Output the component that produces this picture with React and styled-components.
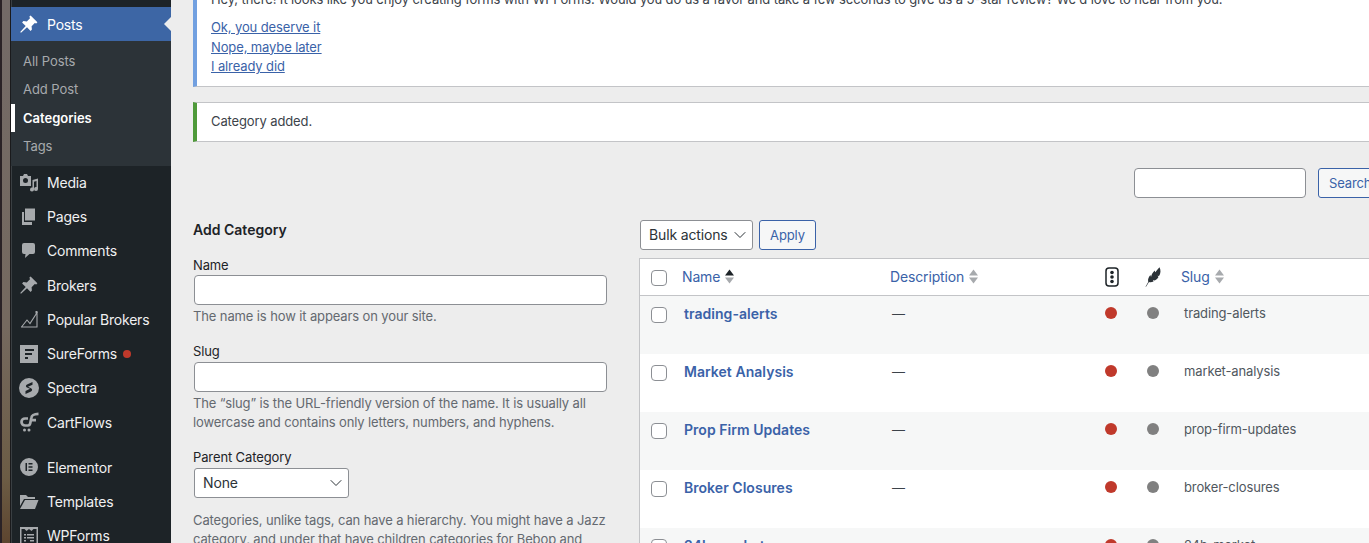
import styled, { createGlobalStyle } from 'styled-components';
import { ChevronDown } from 'lucide-react';

const Global = createGlobalStyle`
    html, body {
        margin: 0;
        height: 100%;
        overflow: hidden;
        background: #ededed;
    }
    * {
        box-sizing: border-box;
    }
    body {
        font-family: Inter, "Liberation Sans", sans-serif;
        font-size: 13px;
        letter-spacing: -0.12px;
        color: #3c434a;
    }
`;

const Page = styled.div`
    display: flex;
    width: 1369px;
    height: 543px;
    overflow: hidden;
`;

const Strip = styled.div`
    width: 11px;
    flex: none;
    background:
        linear-gradient(90deg, #2a2226 0 2px, transparent 2px 10px, #1a1a1c 10px 11px),
        linear-gradient(180deg, #736a67 0, #75695f 60%, #6c5c45 88%, #5d452f 100%);
`;

const Sidebar = styled.nav`
    width: 160px;
    flex: none;
    background: #1d2327;
    box-shadow: inset 1px 0 #3a3f43;
    padding-top: 7px;
`;

const ActiveItem = styled.div`
    position: relative;
    display: flex;
    align-items: center;
    height: 34px;
    background: #3d66a5;
    color: #fff;
    font-size: 14px;
    letter-spacing: -0.2px;
    padding-left: 8px;
    gap: 8px;

    &::after {
        content: '';
        position: absolute;
        right: 0;
        top: 10px;
        border: 7px solid transparent;
        border-right-color: #ededed;
        border-left-width: 0;
    }
`;

const SubMenu = styled.div`
    background: #2c3338;
    padding: 6px 0;
`;

const SubItem = styled.div`
    display: flex;
    align-items: center;
    height: 28.3px;
    padding-left: 8px;
    font-size: 13px;
    letter-spacing: ${p => (p.$current ? '0' : '-0.05px')};
    color: ${p => (p.$current ? '#fff' : '#a7aaad')};
    font-weight: ${p => (p.$current ? 600 : 400)};
    border-left: 4px solid ${p => (p.$current ? '#fff' : 'transparent')};
`;

const MenuList = styled.div`
    display: flex;
    flex-direction: column;
    margin-top: -0.9px;
`;

const MenuItem = styled.div`
    display: flex;
    align-items: center;
    height: 34.25px;
    padding-left: 8px;
    gap: 8px;
    font-size: 14px;
    letter-spacing: -0.2px;
    color: #f0f0f1;
    margin-top: ${p => (p.$separated ? '11px' : '0')};
`;

const IconBox = styled.span`
    width: 20px;
    height: 20px;
    flex: none;
    display: inline-flex;
    color: #a7aaad;

    svg {
        width: 20px;
        height: 20px;
        fill: currentColor;
    }
`;

const ActiveIconBox = styled(IconBox)`
    color: #fff;
`;

const Badge = styled.span`
    width: 8px;
    height: 8px;
    border-radius: 50%;
    background: #c0392b;
    margin-left: -2px;
`;

const Content = styled.main`
    flex: 1;
    min-width: 0;
    padding-left: 22px;
    overflow: hidden;
`;

const Notice = styled.div`
    width: 1300px;
    background: #fff;
    border: 1px solid #c3c4c7;
    border-left: 4px solid ${p => p.$accent};
    padding: 0 14px;
`;

const RatingNotice = styled(Notice)`
    margin-top: -16px;
    height: 103px;
    padding-top: 4px;
`;

const SavedNotice = styled(Notice)`
    margin-top: 15px;
    height: 40px;
    display: flex;
    align-items: center;
    padding-bottom: 2px;
`;

const NoticeText = styled.p`
    margin: 0 0 9px;
    line-height: 20px;
    white-space: nowrap;
`;

const NoticeLink = styled.a`
    display: block;
    color: #3a62a8;
    text-decoration: underline;
    line-height: 19.5px;
`;

const SearchRow = styled.div`
    display: flex;
    margin-top: 26px;
    margin-left: 941px;
    gap: 12px;
    width: 300px;
`;

const TextInput = styled.div`
    height: 30px;
    width: ${p => p.$width};
    flex: none;
    background: #fff;
    border: 1px solid #8c8f94;
    border-radius: 4px;
`;

const OutlineButton = styled.div`
    height: 30px;
    flex: none;
    display: flex;
    align-items: center;
    padding: 0 10px 1px;
    background: #f6f7f7;
    border: 1px solid #3a62a8;
    border-radius: 3px;
    color: #3a62a8;
`;

const Columns = styled.div`
    display: flex;
    margin-top: 22px;
`;

const FormColumn = styled.section`
    width: 447px;
    flex: none;
`;

const FormTitle = styled.h2`
    margin: 0 0 16px;
    font-size: 14px;
    letter-spacing: 0;
    line-height: 20px;
    font-weight: 600;
    color: #1d2327;
`;

const Field = styled.div`
    width: 415px;
    margin-bottom: 16px;
`;

const FieldLabel = styled.label`
    display: block;
    line-height: 18px;
    margin-bottom: ${p => p.$gap || '1px'};
    color: #1d2327;
`;

const FieldInput = styled(TextInput)`
    margin-left: 1px;
    width: 413px;
`;

const Help = styled.p`
    margin: ${p => p.$top || '2px'} 0 0;
    line-height: 19px;
    color: #646970;
`;

const SelectBox = styled.div`
    display: flex;
    align-items: center;
    justify-content: space-between;
    width: ${p => p.$width};
    height: 30px;
    flex: none;
    margin-left: ${p => p.$offset || '0'};
    padding: 0 2px 2px 8px;
    background: #fff;
    border: 1px solid #8c8f94;
    border-radius: 3px;
    font-size: 14px;
    letter-spacing: -0.15px;
    color: #2c3338;

    svg {
        margin-top: 2px;
    }
`;

const ListColumn = styled.section`
    width: 800px;
    flex: none;
`;

const BulkRow = styled.div`
    display: flex;
    gap: 6px;
    margin-bottom: 8px;
`;

const ApplyButton = styled(OutlineButton)`
    width: 57px;
    justify-content: center;
    padding: 0 0 1px;
`;

const ListTable = styled.div`
    margin-left: -1px;
    background: #fff;
    border: 1px solid #c3c4c7;
    border-right: 0;
`;

const Row = styled.div`
    display: grid;
    grid-template-columns: 42px 208px 207px 46px 38px 1fr;
    height: ${p => (p.$head ? '37px' : '58px')};
    align-items: ${p => (p.$head ? 'center' : 'start')};
    padding-top: ${p => (p.$head ? '0' : '8px')};
    padding-bottom: ${p => (p.$head ? '2px' : '0')};
    background: ${p => (p.$alt ? '#f6f7f7' : '#fff')};
    border-bottom: ${p => (p.$head ? '1px solid #c3c4c7' : '0')};
`;

const Check = styled.span`
    display: block;
    width: 16px;
    height: 16px;
    margin: 3px 0 0 11px;
    background: #fff;
    border: 1px solid #8c8f94;
    border-radius: 4px;
`;

const SortHead = styled.a`
    display: flex;
    align-items: center;
    gap: 5px;
    color: #3a62a8;
    font-size: 14px;
    letter-spacing: -0.15px;
`;

const SortArrows = styled.svg`
    width: 9px;
    height: 15px;
`;

const HeadIcon = styled.span`
    display: flex;
    margin-top: 2px;
    padding-left: ${p => p.$pad};

    svg {
        display: block;
    }
`;

const TermName = styled.a`
    padding-left: 2px;
    font-size: 14px;
    letter-spacing: 0.04px;
    line-height: 20px;
    font-weight: 600;
    color: #3a62a8;
`;

const Cell = styled.span`
    padding-left: 2px;
    line-height: 20px;
    color: #3c434a;
`;

const Dot = styled.span`
    display: block;
    width: 12px;
    height: 12px;
    margin: 3px 0 0 ${p => p.$left};
    border-radius: 50%;
    background: ${p => p.$color};
`;

const SlugCell = styled.span`
    padding-left: 3px;
    margin-top: -1px;
    line-height: 20px;
    color: #50575e;
`;

const PinIcon = () => (
    <svg viewBox="0 0 20 20"><path d="M10.4 2.6 11.6 1.4 18.4 8.2 17.2 9.4 15.8 9 12.6 12.2 12.9 15.6 11.6 16.9 8 13.3 2 18.8 1.2 18 6.7 12 3.1 8.4 4.4 7.1 7.8 7.4 11 4.2Z" /></svg>
);

const MediaIcon = () => (
    <svg viewBox="0 0 20 20">
        <path fillRule="evenodd" d="M1 4h3l1-2h3l1 2h3v10H1ZM6.500 6a2.500 2.500 0 1 0 0 5 2.500 2.500 0 0 0 0-5Z" />
        <path d="M13.500 8 19 6.500V17a2 2 0 1 1-1.500-1.900V9l-2.500.7V17.500a2 2 0 1 1-1.500-1.900Z" />
    </svg>
);

const PagesIcon = () => (
    <svg viewBox="0 0 20 20"><path d="M6 1.500h10v12H6Z" /><path d="M3 5h2v10h8v3H3Z" /></svg>
);

const CommentIcon = () => (
    <svg viewBox="0 0 20 20"><path d="M5 2h9a2 2 0 0 1 2 2v7a2 2 0 0 1-2 2h-3.500L6 17l.5-4H5a2 2 0 0 1-2-2V4a2 2 0 0 1 2-2Z" /></svg>
);

const ChartIcon = () => (
    <svg viewBox="0 0 20 20"><path d="M2 18h16.500M2.500 18 8 11l3 3.500 5.500-8.500 1.500-3v15" fill="none" stroke="currentColor" strokeWidth="1.100" /><path d="M16.500 2h2v2h-2Z" /></svg>
);

const SureIcon = () => (
    <svg viewBox="0 0 20 20"><path fillRule="evenodd" d="M1 1h18v18H1ZM6 5v2h9V5ZM6 9v2h7V9ZM6 13v2h3v-2Z" /></svg>
);

const SpectraIcon = () => (
    <svg viewBox="0 0 20 20"><path fillRule="evenodd" d="M10 0a10 10 0 1 0 0 20 10 10 0 0 0 0-20ZM13.500 4 8 6.500c-1.500.8-1.300 2.500 0 3l3 1.200-4.500 2.300V16l5.500-2.600c1.500-.8 1.500-2.600 0-3.200L9 8.800l4.500-2Z" /></svg>
);

const CartIcon = () => (
    <svg viewBox="0 0 20 20">
        <path d="M9 6.500H6a3.500 3.500 0 0 0 0 7h3c1.500 0 2-1 2.300-2.500l1-5C12.800 3 14.500 2 19.500 1.800M11.500 8.200H17" fill="none" stroke="currentColor" strokeWidth="2.700" />
        <circle cx="5.500" cy="18" r="1.500" />
        <circle cx="10" cy="18" r="1.500" />
    </svg>
);

const ElementorIcon = () => (
    <svg viewBox="0 0 20 20"><path fillRule="evenodd" d="M10 1a9 9 0 1 0 0 18 9 9 0 0 0 0-18ZM6.500 6h1.500v8H6.500ZM9.500 6h4v1.500h-4ZM9.500 9.200h4v1.500h-4ZM9.500 12.500h4V14h-4Z" /></svg>
);

const FolderIcon = () => (
    <svg viewBox="0 0 20 20"><path d="M1 3h6l2 2h7v2H5L1 14Z" /><path d="M6 8h13.500L16 17H1Z" /></svg>
);

const FormsIcon = () => (
    <svg viewBox="0 0 20 20"><path fillRule="evenodd" d="M1 1h18v19H1ZM2.500 3v15.500h15V3h-3l-2 2-2.500-2-2.500 2-2-2ZM5 8h2v1.500H5ZM8 8h7v1.500H8ZM5 11h2v1.500H5ZM8 11h7v1.500H8ZM5 14h2v1.500H5ZM11 14h4v1.500h-4Z" /></svg>
);

const menuItems = [
    { label: 'Media', icon: <MediaIcon /> },
    { label: 'Pages', icon: <PagesIcon /> },
    { label: 'Comments', icon: <CommentIcon /> },
    { label: 'Brokers', icon: <PinIcon /> },
    { label: 'Popular Brokers', icon: <ChartIcon /> },
    { label: 'SureForms', icon: <SureIcon />, badge: true },
    { label: 'Spectra', icon: <SpectraIcon /> },
    { label: 'CartFlows', icon: <CartIcon /> },
    { label: 'Elementor', icon: <ElementorIcon />, separated: true },
    { label: 'Templates', icon: <FolderIcon /> },
    { label: 'WPForms', icon: <FormsIcon /> },
];

const terms = [
    { name: 'trading-alerts', slug: 'trading-alerts' },
    { name: 'Market Analysis', slug: 'market-analysis' },
    { name: 'Prop Firm Updates', slug: 'prop-firm-updates' },
    { name: 'Broker Closures', slug: 'broker-closures' },
    { name: '24h-market', slug: '24h-market' },
];

const Arrows = ({ sorted }) => (
    <SortArrows viewBox="0 0 9 15">
        <path d="M4.500 0.500 9 6.500H0Z" fill={sorted ? '#1d2327' : '#a7aaad'} />
        <path d="M0 8.500h9L4.500 14.500Z" fill="#a7aaad" />
    </SortArrows>
);

const App = () => (
    <Page>
        <Global />
        <Strip />
        <Sidebar>
            <ActiveItem>
                <ActiveIconBox><PinIcon /></ActiveIconBox>
                Posts
            </ActiveItem>
            <SubMenu>
                <SubItem>All Posts</SubItem>
                <SubItem>Add Post</SubItem>
                <SubItem $current>Categories</SubItem>
                <SubItem>Tags</SubItem>
            </SubMenu>
            <MenuList>
                {menuItems.map(item => (
                    <MenuItem key={item.label} $separated={item.separated}>
                        <IconBox>{item.icon}</IconBox>
                        {item.label}
                        {item.badge && <Badge />}
                    </MenuItem>
                ))}
            </MenuList>
        </Sidebar>
        <Content>
            <RatingNotice $accent="#72a0e0">
                <NoticeText>Hey, there! It looks like you enjoy creating forms with WPForms. Would you do us a favor and take a few seconds to give us a 5-star review? We'd love to hear from you.</NoticeText>
                <NoticeLink>Ok, you deserve it</NoticeLink>
                <NoticeLink>Nope, maybe later</NoticeLink>
                <NoticeLink>I already did</NoticeLink>
            </RatingNotice>
            <SavedNotice $accent="#4f9a3a">Category added.</SavedNotice>
            <SearchRow>
                <TextInput $width="172px" />
                <OutlineButton>Search Categories</OutlineButton>
            </SearchRow>
            <Columns>
                <FormColumn>
                    <FormTitle>Add Category</FormTitle>
                    <Field>
                        <FieldLabel>Name</FieldLabel>
                        <FieldInput />
                        <Help>The name is how it appears on your site.</Help>
                    </Field>
                    <Field>
                        <FieldLabel $gap="2px">Slug</FieldLabel>
                        <FieldInput />
                        <Help>The “slug” is the URL-friendly version of the name. It is usually all lowercase and contains only letters, numbers, and hyphens.</Help>
                    </Field>
                    <Field>
                        <FieldLabel $gap="2px">Parent Category</FieldLabel>
                        <SelectBox $width="155px" $offset="1px">
                            None
                            <ChevronDown size={20} strokeWidth={1.2} />
                        </SelectBox>
                        <Help $top="13px">Categories, unlike tags, can have a hierarchy. You might have a Jazz<br />category, and under that have children categories for Bebop and<br />Big Band. Totally optional.</Help>
                    </Field>
                </FormColumn>
                <ListColumn>
                    <BulkRow>
                        <SelectBox $width="113px">
                            Bulk actions
                            <ChevronDown size={20} strokeWidth={1.2} />
                        </SelectBox>
                        <ApplyButton>Apply</ApplyButton>
                    </BulkRow>
                    <ListTable>
                        <Row $head>
                            <Check />
                            <SortHead>Name <Arrows sorted /></SortHead>
                            <SortHead>Description <Arrows /></SortHead>
                            <HeadIcon $pad="8px">
                                <svg width="14" height="20" viewBox="0 0 14 20">
                                    <rect x="1" y="1" width="12" height="18" rx="3" fill="none" stroke="#1d2327" strokeWidth="1.500" />
                                    <circle cx="7" cy="5.500" r="1.800" fill="#1d2327" />
                                    <circle cx="7" cy="10" r="1.800" fill="#1d2327" />
                                    <circle cx="7" cy="14.500" r="1.800" fill="#1d2327" />
                                </svg>
                            </HeadIcon>
                            <HeadIcon $pad="2px">
                                <svg width="16" height="20" viewBox="0 0 16 20">
                                    <path d="M0.500 19.800 3.200 15C2.500 12 4 9.500 5.500 8c.2 1 .3 1.500.6 1.800C6.500 7.500 8 5 10 3.500c0 1 0 1.500.3 1.700C11.500 3.500 13 1.800 14.500.2c1.500 3 1.300 6.300-.5 8.800l-1.500-.3 1 1.200c-1 1.700-2.500 3-4 3.700l-1.500-.5.500 1.300c-1.500.8-3 1-4.500.6L1 19.800Z" fill="#2c3338" />
                                </svg>
                            </HeadIcon>
                            <SortHead>Slug <Arrows /></SortHead>
                        </Row>
                        {terms.map((term, i) => (
                            <Row key={term.slug} $alt={i % 2 === 0}>
                                <Check />
                                <TermName>{term.name}</TermName>
                                <Cell>—</Cell>
                                <Dot $left="8px" $color="#c0392b" />
                                <Dot $left="4px" $color="#808080" />
                                <SlugCell>{term.slug}</SlugCell>
                            </Row>
                        ))}
                    </ListTable>
                </ListColumn>
            </Columns>
        </Content>
    </Page>
);

export default App;
